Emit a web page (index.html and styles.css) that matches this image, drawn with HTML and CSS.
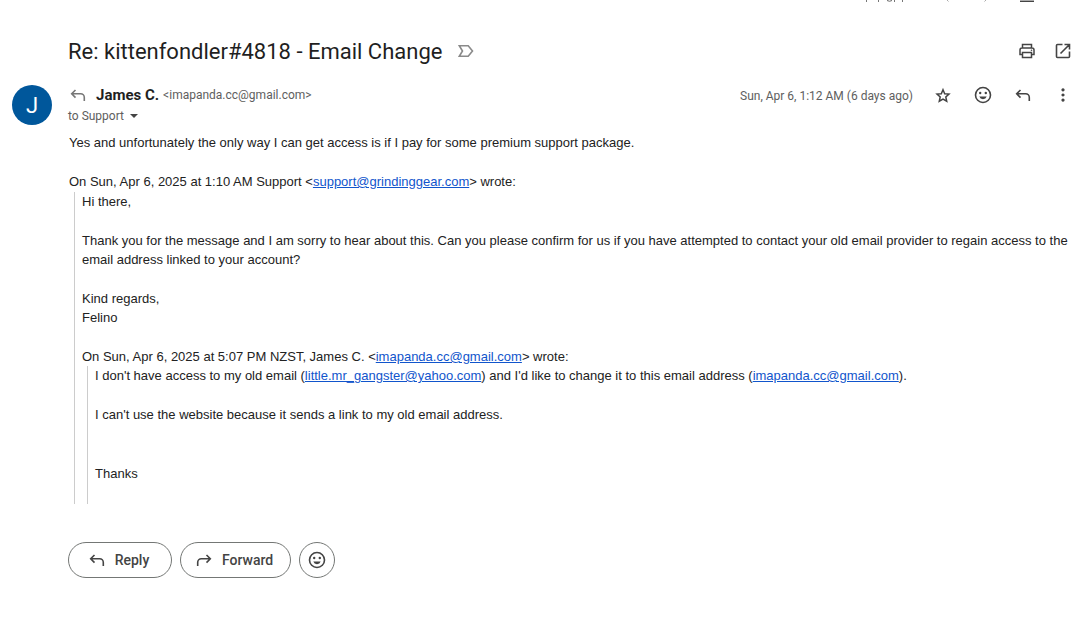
FILE: index.html
```html
<!DOCTYPE html>
<html lang="en">
<head>
<meta charset="utf-8">
<title>Re: kittenfondler#4818 - Email Change</title>
<link rel="stylesheet" href="styles.css">
</head>
<body>
<svg class="sprite" aria-hidden="true">
  <symbol id="reply" viewBox="0 0 20 20"><path d="M7.500 5 3.700 8.800l3.800 3.800M3.700 8.800h9a3.600 3.600 0 0 1 3.600 3.600V16" fill="none" stroke="currentColor" stroke-width="1.600"/></symbol>
  <symbol id="smile" viewBox="0 0 20 20"><circle cx="10" cy="10" r="7.500" fill="none" stroke="currentColor" stroke-width="1.600"/><circle cx="7.200" cy="8" r="1.200" fill="currentColor"/><circle cx="12.800" cy="8" r="1.200" fill="currentColor"/><path d="M6.300 11.500h7.400a3.900 3.900 0 0 1-7.400 0z" fill="currentColor"/></symbol>
</svg>
<div class="toolbar" aria-hidden="true">
  <svg class="toolbar-art" width="180" height="3" viewBox="0 0 180 3"><path d="M6.500 0v2M18.500 0v2M34.500 0v2M42.500 0v2" stroke="#777"/><path d="M27 .5q2.500 1.500 5 0" fill="none" stroke="#666"/><path d="m87 0 1.500 1.500M126 0l-1.500 1.500" stroke="#aaa"/><path d="M160 .5h14" stroke="#aaa"/><path d="M160 1.500h14" stroke="#444"/></svg>
</div>
<main class="mail">
  <header class="subject">
    <h1>Re: kittenfondler#4818 - Email Change</h1>
    <button class="icon" aria-label="Important"><svg width="20" height="20" viewBox="0 0 20 20"><path d="M3.300 4.700h8.900l4.300 5.300-4.300 5.300H3.300L6.500 10z" fill="none" stroke="#8a8a8a" stroke-width="1.600"/></svg></button>
    <div class="tools">
      <button class="icon" aria-label="Print all"><svg width="20" height="20" viewBox="0 0 20 20"><path d="M5.500 7V3.500h9V7M5.500 13.500H3V9q0-2 2-2h10q2 0 2 2v4.500h-2.500M5.500 11.500h9v5h-9z" fill="none" stroke="currentColor" stroke-width="1.500"/><circle cx="14.500" cy="9.300" r=".8" fill="currentColor"/></svg></button>
      <button class="icon" aria-label="In new window"><svg width="20" height="20" viewBox="0 0 20 20"><path d="M9.500 3.500h-5q-1 0-1 1v11q0 1 1 1h11q1 0 1-1v-5M11.500 3.500h5v5M16.500 3.500l-9 9" fill="none" stroke="currentColor" stroke-width="1.600"/></svg></button>
    </div>
  </header>
  <article class="message">
    <div class="avatar" role="img" aria-label="James C.">J</div>
    <div class="content">
      <header class="meta">
        <div>
          <div class="sender"><svg class="replied" width="20" height="20"><use href="#reply"/></svg><strong>James C.</strong><span>&lt;imapanda.cc@gmail.com&gt;</span></div>
          <button class="to">to Support<i class="caret"></i></button>
        </div>
        <div class="actions">
          <time>Sun, Apr 6, 1:12 AM (6 days ago)</time>
          <button class="icon" aria-label="Star"><svg width="20" height="20" viewBox="0 0 20 20"><path d="m10 4.700 1.700 4 4.300.4-3.200 2.900.9 4.200-3.700-2.200-3.700 2.200.9-4.200L4 9.100l4.300-.4z" fill="none" stroke="currentColor" stroke-width="1.500"/></svg></button>
          <button class="icon" aria-label="Add reaction"><svg width="20" height="20"><use href="#smile"/></svg></button>
          <button class="icon" aria-label="Reply"><svg width="20" height="20"><use href="#reply"/></svg></button>
          <button class="icon" aria-label="More"><svg width="20" height="20" viewBox="0 0 20 20"><path d="M10 3.300a1.600 1.600 0 1 0 .01 0M10 8.400a1.600 1.600 0 1 0 .01 0M10 13.500a1.600 1.600 0 1 0 .01 0" fill="currentColor"/></svg></button>
        </div>
      </header>
      <div class="body">
        <p>Yes and unfortunately the only way I can get access is if I pay for some premium support package.</p>
        <p>On Sun, Apr 6, 2025 at 1:10 AM Support &lt;<a href="#">support@grindinggear.com</a>&gt; wrote:</p>
        <blockquote>
          <p>Hi there,</p>
          <p>Thank you for the message and I am sorry to hear about this. Can you please confirm for us if you have attempted to contact your old email provider to regain access to the email address linked to your account?</p>
          <p>Kind regards,<br>Felino</p>
          <p>On Sun, Apr 6, 2025 at 5:07 PM NZST, James C. &lt;<a href="#">imapanda.cc@gmail.com</a>&gt; wrote:</p>
          <blockquote class="inner">
            <p>I don't have access to my old email (<a href="#">little.mr_gangster@yahoo.com</a>) and I'd like to change it to this email address (<a href="#">imapanda.cc@gmail.com</a>).</p>
            <p>I can't use the website because it sends a link to my old email address.<br><br></p>
            <p>Thanks<br><br></p>
          </blockquote>
        </blockquote>
      </div>
      <footer class="replies">
        <button class="pill"><svg width="20" height="20"><use href="#reply"/></svg>Reply</button>
        <button class="pill"><svg class="flip" width="20" height="20"><use href="#reply"/></svg>Forward</button>
        <button class="pill round" aria-label="Add reaction"><svg width="20" height="20"><use href="#smile"/></svg></button>
      </footer>
    </div>
  </article>
</main>
</body>
</html>
```
FILE: styles.css
```css
* { box-sizing: border-box; }
body { margin: 0; background: #fff; color: #1f1f1f; font: 12px/20px Roboto, sans-serif; }
button { border: 0; padding: 0; background: none; color: inherit; font: inherit; cursor: pointer; }
svg { display: block; flex: none; }
p { margin: 0; }
.sprite { position: absolute; width: 0; height: 0; }
.toolbar { display: flex; justify-content: flex-end; height: 36px; padding-right: 40px; }
.mail { padding-left: 12px; }
.subject { display: flex; align-items: center; height: 30px; padding-left: 56px; gap: 14px; }
h1 { margin: 0; padding-top: 2px; font: 400 22px/28px Roboto, sans-serif; }
.icon { width: 20px; height: 20px; color: #444; flex: none; }
.tools { display: flex; gap: 16px; margin-left: auto; padding-right: 7px; }
.message { display: flex; gap: 16px; padding-top: 19px; }
.avatar { flex: none; width: 40px; height: 40px; border-radius: 50%; background: #00579b; color: #fff; font: 22px/42px Roboto, sans-serif; text-align: center; }
.content { flex: 1; min-width: 0; }
.meta { display: flex; justify-content: space-between; color: #5e5e5e; }
.sender { display: flex; align-items: center; gap: 4px; height: 20px; }
.sender strong { margin-left: 4px; font-size: 15px; color: #1f1f1f; }
.sender span, time { line-height: 22px; }
.replied { color: #777; }
.to { display: flex; align-items: center; gap: 6px; line-height: 22px; }
.caret { border: 4px solid transparent; border-top-color: #444; border-bottom: 0; }
.actions { display: flex; gap: 20px; padding-right: 7px; height: 20px; }
.body { display: grid; row-gap: 19px; padding: 6px 8px 0 1px; font: 13px/20px "Liberation Sans", Arial, sans-serif; color: #222; }
.body a { color: #15c; }
blockquote { display: grid; row-gap: 20px; margin: -19px 0 0 5px; padding-left: 7px; border-left: 1px solid #ccc; line-height: 19px; }
.inner { row-gap: 19px; margin-top: -20px; line-height: 20px; }
.replies { display: flex; gap: 8px; padding-top: 38px; }
.pill { display: flex; align-items: center; justify-content: center; gap: 8px; min-width: 104px; height: 36px; padding: 0 17px 0 13px; border: 1px solid #747775; border-radius: 18px; color: #444; font-size: 14px; font-weight: 500; }
.round { width: 36px; min-width: 36px; padding: 0; }
.flip { transform: scaleX(-1); }
```
